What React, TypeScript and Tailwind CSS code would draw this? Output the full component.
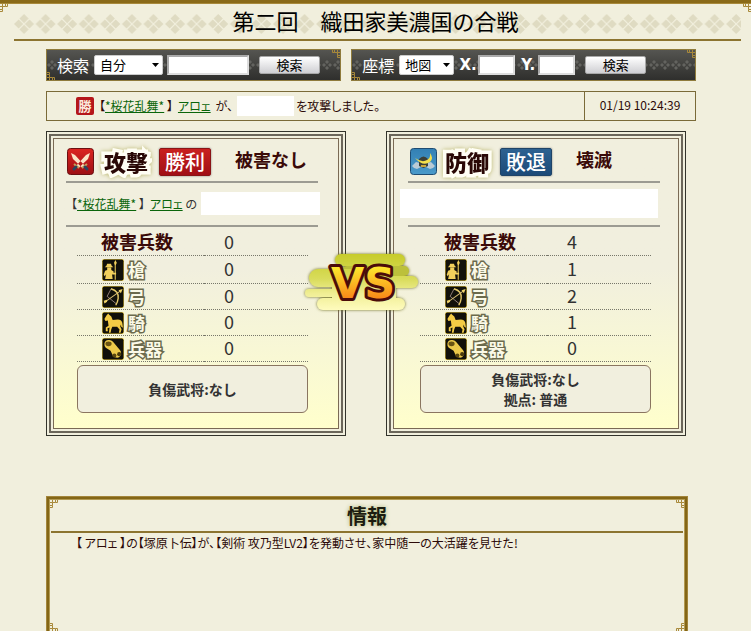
import React, { useState } from 'react'

type StatKind = 'total' | 'spear' | 'bow' | 'horse' | 'weapon'

type Side = {
  id: 'attack' | 'defense'
  name: string
  result: string
  damage: string
  stats: number[]
  notes: string[]
}

const statRows: { kind: StatKind; label: string; height: string }[] = [
  { kind: 'total', label: '被害兵数', height: 'h-[29px]' },
  { kind: 'spear', label: '槍', height: 'h-7' },
  { kind: 'bow', label: '弓', height: 'h-[26px]' },
  { kind: 'horse', label: '騎', height: 'h-[26px]' },
  { kind: 'weapon', label: '兵器', height: 'h-[26px]' },
]

const sides: Side[] = [
  { id: 'attack', name: '攻撃', result: '勝利', damage: '被害なし', stats: [0, 0, 0, 0, 0], notes: ['負傷武将:なし'] },
  { id: 'defense', name: '防御', result: '敗退', damage: '壊滅', stats: [4, 1, 2, 1, 0], notes: ['負傷武将:なし', '拠点: 普通'] },
]

const Corner = ({ className }: { className: string }) => (
  <svg viewBox='0 0 8 8' className={'absolute size-2 ' + className} fill='none' stroke='#a8893a' aria-hidden='true'>
    <path d='M0 2.5H2.5V0M2.5 2.5H5.5V0M2.5 2.5V5.5H0M0 7.5H2.5V5.5M5.5 2.5H7.5V0' />
  </svg>
)

const DiamondBand = () => (
  <svg className='absolute inset-x-0 top-[2px] h-[21px] w-full' aria-hidden='true'>
    <defs>
      <pattern id='diamonds' width='21.58' height='21' patternUnits='userSpaceOnUse'>
        <path fill='#dfdbc2' d='M10 0l4.6 4.6L10 9.2 5.4 4.6zM10 10.8l4.6 4.6L10 20l-4.6-4.6zM4.6 5.4l4.6 4.6-4.6 4.6L0 10zM15.4 5.4L20 10l-4.6 4.6-4.6-4.6z' />
      </pattern>
    </defs>
    <rect width='100%' height='21' fill='url(#diamonds)' />
  </svg>
)

const BarDiamonds = () => (
  <svg className='absolute inset-0 h-full w-full' aria-hidden='true'>
    <defs>
      <pattern id='barDiamonds' width='11' height='30' patternUnits='userSpaceOnUse'>
        <path fill='#63635f' d='M5 10l2 2-2 2-2-2zM5 16l2 2-2 2-2-2zM2 13l2 2-2 2-2-2zM8 13l2 2-2 2-2-2z' />
      </pattern>
    </defs>
    <rect width='100%' height='30' fill='url(#barDiamonds)' />
  </svg>
)

const StatIcon = ({ kind }: { kind: StatKind }) => (
  <svg viewBox='0 0 64 64' className='size-[22px] shrink-0' aria-hidden='true'>
    <rect x='1.5' y='1.5' width='61' height='61' rx='5' fill='#11100a' stroke='#e8c63a' strokeWidth='3' />
    {kind === 'spear' && (
      <g fill='#f0cf5c'>
        <path d='M8 24Q14 20 15 14H26Q27 20 33 24zM15 25H27V32L34 36 33 44 29 43 31 58H9L12 44 8 50 5 46 9 34 15 32z' />
        <path d='M39 3L43 11 40 18V60H37V18L35 11zM29 40H41V45H29z' />
      </g>
    )}
    {kind === 'bow' && (
      <g fill='none'>
        <path stroke='#a18a86' strokeWidth='2.5' d='M26 9L15 30 43 53' />
        <path stroke='#e5c96a' strokeWidth='4' d='M26 8Q50 15 47 36 46 46 40 56' />
        <path stroke='#d8bd74' strokeWidth='3' d='M9 46L54 14' />
        <path fill='#f0d36a' d='M60 9L55 21 48 12zM5 43L14 40 15 46 7 51z' />
      </g>
    )}
    {kind === 'horse' && (
      <path fill='#f3cb45' d='M7 20L13 10 18 4 21 8 27 13 31 23 46 22Q56 22 59 31L61 46 56 43 55 36 53 42 57 50 54 60H49L51 51 44 43 30 43 27 50 25 60H20L22 45 16 47 17 56H11L11 45 19 40 17 25 10 26z' />
    )}
    {kind === 'weapon' && (
      <g>
        <path fill='#ecc94a' d='M7 17Q8 7 19 6 27 5 32 11L52 35Q58 42 54 51 49 59 41 57 34 57 31 50L25 37 11 28Q6 24 7 17z' />
        <ellipse cx='19' cy='17' rx='9' ry='7' fill='#6a5413' />
        <circle cx='36' cy='51' r='6' fill='#5a470f' />
        <circle cx='50' cy='47' r='6' fill='#4a3a0c' />
      </g>
    )}
  </svg>
)

const SideIcon = ({ id }: { id: Side['id'] }) => {
  if (id === 'attack') {
    return (
      <svg viewBox='0 0 27 27' className='size-[27px]' aria-hidden='true'>
        <defs>
          <linearGradient id='redTile' x2='0' y2='1'>
            <stop stopColor='#dc2420' />
            <stop offset='1' stopColor='#9d0f14' />
          </linearGradient>
        </defs>
        <rect x='.5' y='.5' width='26' height='26' rx='3' fill='url(#redTile)' stroke='#6b1012' />
        <path fill='#fbe3c6' d='M4 5L8 7 18 18 15.500 20 6 11zM23 5L19 7 9 18 11.500 20 21 11z' />
        <path stroke='#c4a05a' strokeWidth='2' d='M7 16l5 4M20 16l-5 4' />
        <path stroke='#29465f' strokeWidth='3' strokeLinecap='round' d='M9 19l-2 2M18 19l2 2' />
      </svg>
    )
  }
  return (
    <svg viewBox='0 0 27 27' className='size-[27px]' aria-hidden='true'>
      <defs>
        <linearGradient id='blueTile' x2='0' y2='1'>
          <stop stopColor='#3380b4' />
          <stop offset='1' stopColor='#4a9aca' />
        </linearGradient>
      </defs>
      <rect x='.5' y='.5' width='26' height='26' rx='3' fill='url(#blueTile)' stroke='#1f4c72' />
      <path fill='#b9cbd6' d='M2 18l4-4 4 1 1 4-4 2-3-1zM25 18l-4-4-4 1-1 4 4 2 3-1z' />
      <path fill='#3c4038' d='M9 11Q13.500 6 18 11V18L13.500 20 9 18z' />
      <path fill='#f4e04c' d='M5 10Q12 15 17 12 21 10 20 5 24 10 20 14 13 19 5 10z' />
      <path fill='#c9a43a' d='M11 17h5v2h-5z' />
    </svg>
  )
}

const VersusMark = () => (
  <svg viewBox='0 0 128 68' className='h-[68px] w-32' role='img' aria-label='VS'>
    <defs>
      <linearGradient id='cloud' gradientUnits='userSpaceOnUse' x1='0' y1='4' x2='0' y2='62'>
        <stop stopColor='#c6cb28' />
        <stop offset='.45' stopColor='#d9dc5c' />
        <stop offset='.7' stopColor='#f0ee94' />
        <stop offset='1' stopColor='#fffcc0' />
      </linearGradient>
      <linearGradient id='flame' x2='0' y2='1'>
        <stop offset='.2' stopColor='#fde52c' />
        <stop offset='.9' stopColor='#f77a16' />
      </linearGradient>
      <filter id='pillGlow' x='-10%' y='-50%' width='120%' height='200%'>
        <feDropShadow dx='0' dy='0' stdDeviation='1.500' floodColor='#6f7020' />
      </filter>
    </defs>
    <g fill='url(#cloud)' filter='url(#pillGlow)'>
      <rect x='33' y='5' width='70' height='12' rx='6' />
      <rect x='40' y='17' width='67' height='10' rx='5' fill='#bcc03a' />
      <rect x='7' y='20' width='50' height='18' rx='9' />
      <rect x='50' y='27' width='66' height='12' rx='6' />
      <rect x='3' y='40' width='60' height='8' rx='4' />
      <rect x='30' y='36' width='64' height='16' />
      <rect x='15' y='49' width='88' height='12' rx='6' />
    </g>
    <text
      x='61'
      y='49'
      textAnchor='middle'
      fontFamily='"DejaVu Sans", sans-serif'
      fontWeight='700'
      fontSize='43'
      fill='url(#flame)'
      stroke='#4a0c0a'
      strokeWidth='6'
      strokeLinejoin='round'
      paintOrder='stroke'
    >
      VS
    </text>
  </svg>
)

const SearchSelect = ({ id, options, className }: { id: string; options: string[]; className: string }) => (
  <div className={'relative ' + className}>
    <select id={id} className='block h-5 w-full appearance-none rounded-xs border border-[#ccc] bg-white pl-[5px] text-[13px] leading-4 text-black'>
      {options.map((option) => <option key={option}>{option}</option>)}
    </select>
    <svg viewBox='0 0 7 4' className='pointer-events-none absolute top-2 right-1 h-1 w-[7px]' aria-hidden='true'>
      <path d='M0 0H7L3.500 4z' />
    </svg>
  </div>
)

const SearchBar = ({ className, children }: { className: string; children: React.ReactNode }) => (
  <form
    onSubmit={(e) => e.preventDefault()}
    className={'relative h-8 border border-[#8f7b3c] bg-linear-to-b from-[#555551] to-[#2f2f2d] ' + className}
  >
    <BarDiamonds />
    <Corner className='top-0 right-0 -scale-x-100' />
    <Corner className='bottom-0 left-0 -scale-y-100' />
    <div className='relative flex h-full items-center pl-[10px]'>{children}</div>
  </form>
)

const inputStyle = 'h-5 border-2 border-t-[#aaa] border-l-[#aaa] border-r-[#ddd] border-b-[#ddd] bg-white text-[13px] text-black outline-none'
const buttonStyle = 'h-[18px] w-[61px] rounded-xs border border-[#a8a8a8] bg-linear-to-b from-white to-[#cfcfd3] text-[13px] leading-4 text-black'

const SearchForms = () => {
  const [name, setName] = useState('')
  const [x, setX] = useState('')
  const [y, setY] = useState('')

  return (
    <div className='flex gap-[10px]'>
      <SearchBar className='flex-[295]'>
        <label htmlFor='target' className='mr-[5px] text-base text-white'>検索</label>
        <SearchSelect id='target' options={['自分', '同盟']} className='w-[69px]' />
        <input aria-label='検索' value={name} onChange={(e) => setName(e.target.value)} className={'ml-1 w-[82px] ' + inputStyle} />
        <button className={'ml-[10px] ' + buttonStyle}>検索</button>
      </SearchBar>
      <SearchBar className='flex-[345]'>
        <label htmlFor='place' className='mr-[5px] text-base text-white'>座標</label>
        <SearchSelect id='place' options={['地図', '座標']} className='w-[55px]' />
        <label htmlFor='posX' className='ml-1 w-5 text-center font-[DejaVu_Sans,sans-serif] text-[15px] font-bold text-white'>X.</label>
        <input id='posX' value={x} onChange={(e) => setX(e.target.value)} className={'w-[37px] ' + inputStyle} />
        <label htmlFor='posY' className='ml-[3px] w-5 text-center font-[DejaVu_Sans,sans-serif] text-[15px] font-bold text-white'>Y.</label>
        <input id='posY' value={y} onChange={(e) => setY(e.target.value)} className={'w-[37px] ' + inputStyle} />
        <button className={'ml-[10px] ' + buttonStyle}>検索</button>
      </SearchBar>
    </div>
  )
}

const PlayerLinks = () => (
  <span>
    【<a href='#alliance' className='text-[#0a650a] underline'>*桜花乱舞*</a> 】<a href='#player' className='ml-[5px] text-[#0a650a] underline'>アロェ</a>
  </span>
)

const SideCard = ({ side }: { side: Side }) => {
  const isAttack = side.id === 'attack'
  return (
    <section className='flex-1 border border-[#33332b] p-[2px]'>
      <div className='border-2 border-[#6b665a] p-[2px]'>
        <div className={'border border-[#7a6a55] bg-linear-to-b from-[#f1efde] from-45% to-[#ffffcc] pt-[9px] pb-[15px] ' + (isAttack ? 'pr-5 pl-3' : 'pr-[18px] pl-[14px]')}>
          <div className='flex h-[33px] items-start'>
            <div className={isAttack ? 'pl-px' : 'pl-[2px]'}><SideIcon id={side.id} /></div>
            <h2 className={'w-[46px] text-[22px] leading-[26px] font-black text-[#2a0806] [-webkit-text-stroke:7px_#fffef4] [paint-order:stroke_fill] drop-shadow-[0_0_2px_#b9b56c] ' + (isAttack ? 'ml-[10px]' : 'ml-2')}>
              {side.name}
            </h2>
            <div className={'ml-[9px] h-7 w-[52px] rounded-xs border text-center text-[20px] leading-[26px] font-medium text-white shadow-[0_0_2px_#777] ' + (isAttack ? 'border-[#8a1416] bg-linear-to-b from-[#c9201f] to-[#a10f15]' : 'border-[#1f4468] bg-linear-to-b from-[#2d6291] to-[#1c4a78]')}>
              {side.result}
            </div>
            <p className='ml-6 text-[18px] leading-[22px] font-bold text-[#3a0a08]'>{side.damage}</p>
          </div>
          <div className='flex h-[46px] items-center border-y-2 border-[#9c9b92]'>
            {isAttack ? (
              <>
                <div className='w-[135px] pl-[5px] text-xs text-[#333] [font-feature-settings:"palt"]'><PlayerLinks /> の</div>
                <div className='-mr-[2px] mb-[2px] h-[23px] flex-1 bg-white'></div>
              </>
            ) : (
              <div className='mr-[2px] mb-px -ml-2 h-[29px] flex-1 bg-white'></div>
            )}
          </div>
          <div className={isAttack ? 'pr-[10px] pl-[11px]' : 'pr-[9px] pl-3'}>
            <table className='w-full border-separate border-spacing-0'>
              <tbody>
                {statRows.map((row, i) => (
                  <tr key={row.kind} className={row.height}>
                    <th scope='row' className='w-[55%] border-b border-dotted border-[#77776a] p-0 pl-6'>
                      {row.kind === 'total' ? (
                        <div className='text-left text-[18px] leading-6 font-bold text-[#3a0a08]'>{row.label}</div>
                      ) : (
                        <div className='flex items-center gap-1 pl-px text-[17px] leading-6 font-bold text-[#fbfae8] [-webkit-text-stroke:3px_#6b6a4c] [paint-order:stroke_fill]'>
                          <StatIcon kind={row.kind} />{row.label}
                        </div>
                      )}
                    </th>
                    <td className={'border-b border-dotted border-[#77776a] p-0 pl-5 text-[18px] leading-5 text-[#333] ' + (row.kind === 'total' ? '' : 'pb-[3px]')}>{side.stats[i]}</td>
                  </tr>
                ))}
              </tbody>
            </table>
            <div className='mt-[3px] flex h-12 flex-col items-center justify-center rounded-md border border-[#8a7560] bg-[#f1efde] text-sm leading-5 font-bold text-[#333]'>
              {side.notes.map((note) => <p key={note}>{note}</p>)}
            </div>
          </div>
        </div>
      </div>
    </section>
  )
}

export default function App() {
  return (
    <div className='relative flex min-h-screen flex-col bg-[#f1efdd] font-[Noto_Sans_CJK_JP,sans-serif] text-[#2c0a08]'>
      <div className='h-1 border-b border-[#a8893a] bg-[#8a6a18]'></div>
      <Corner className='top-1 left-0' />
      <Corner className='top-1 right-0 -scale-x-100' />

      <header className='mr-[10px] ml-[14px] border-b-2 border-[#8c7430] pt-2'>
        <div className='relative h-[27px]'>
          <DiamondBand />
          <h1 className='relative pr-1 text-center text-[22px] leading-4 text-black'>第二回　織田家美濃国の合戦</h1>
        </div>
      </header>

      <main className='flex flex-1 flex-col pt-2 pr-[55px] pl-[46px]'>
        <SearchForms />

        <div className='mt-[10px] flex h-[30px] border border-[#7a6a38] text-xs'>
          <div className='flex flex-1 items-center pb-px pl-[29px] [font-feature-settings:"palt"]'>
            <span className='mr-[5px] size-[18px] rounded-xs bg-[#b5161b] text-center text-[13px] leading-[18px] font-bold text-[#fbe9dc]'>勝</span>
            <PlayerLinks />
            <span className='ml-[5px]'>が、</span>
            <span className='mr-[2px] ml-1 h-5 w-[57px] bg-white'></span>
            <span>を攻撃しました。</span>
          </div>
          <time className='flex w-[111px] items-center justify-center border-l border-[#7a6a38] pb-[2px]'>01/19 10:24:39</time>
        </div>

        <div className='relative mt-[10px] mr-[10px] flex gap-10'>
          {sides.map((side) => <SideCard key={side.id} side={side} />)}
          <div className='pointer-events-none absolute inset-x-0 top-[118px] flex justify-center'>
            <VersusMark />
          </div>
        </div>

        <section className='relative mt-[60px] mr-2 min-h-[135px] flex-1 border border-b-0 border-[#a3853a] px-1 pt-[3px] shadow-[inset_2px_2px_0_#846616,inset_-2px_0_0_#846616,inset_3px_3px_0_#b39a52,inset_-3px_0_0_#b39a52]'>
          <Corner className='top-[3px] left-[3px]' />
          <Corner className='top-[3px] right-[3px] -scale-x-100' />
          <Corner className='bottom-0 left-[3px] -scale-y-100' />
          <Corner className='right-[3px] bottom-0 -scale-100' />
          <h2 className='h-[33px] border-b-2 border-[#8c7430] text-center text-[20px] leading-8 font-bold text-[#1c1c10] [text-shadow:0_0_4px_#a9b070]'>情報</h2>
          <p className='pt-px pl-[25px] text-xs leading-[18px] [font-feature-settings:"palt"]'>
            【 アロェ 】の【塚原卜伝】が、【剣術 攻乃型LV2】を発動させ、家中随一の大活躍を見せた!
          </p>
        </section>
      </main>
    </div>
  )
}
